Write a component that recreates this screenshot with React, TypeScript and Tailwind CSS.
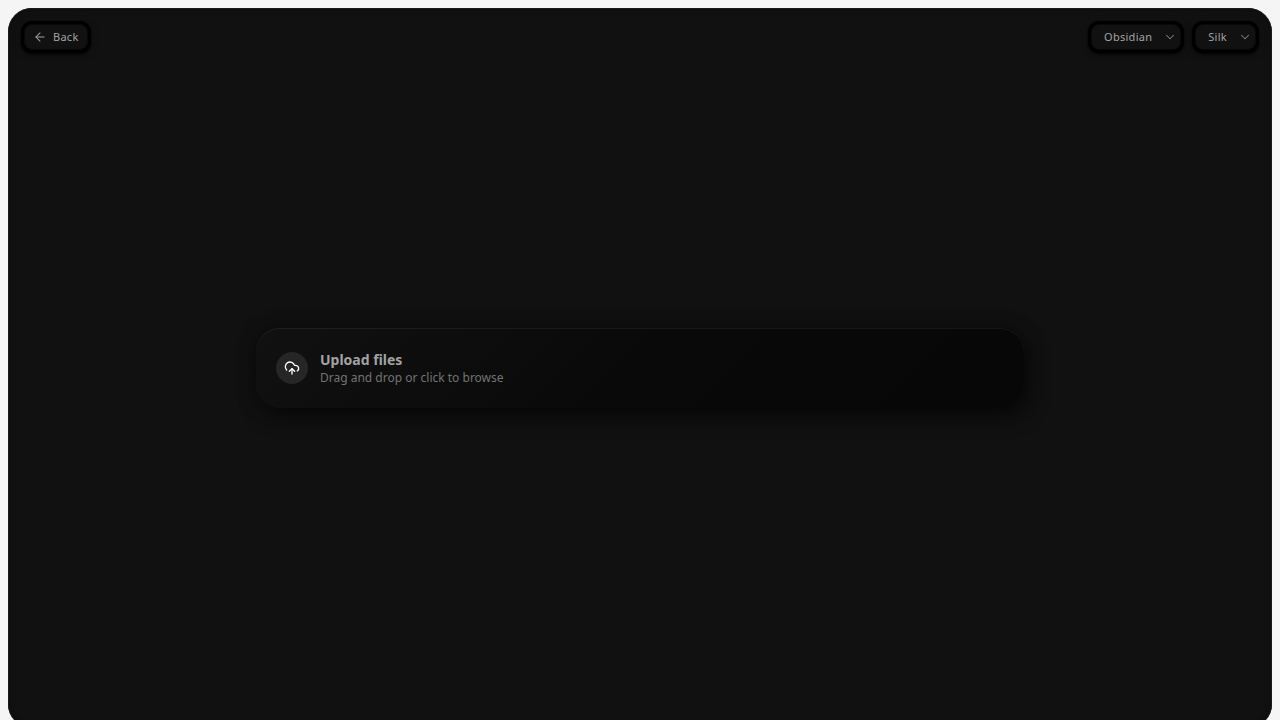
import { useState } from 'react';
import { ArrowLeft, ChevronDown, CloudUpload } from 'lucide-react';
import clsx from 'clsx';

const CONTROL =
  'h-[26px] rounded-lg border border-[#080808] bg-[#111111] text-[11px] leading-4 tracking-wide text-[#a3a3a3] shadow-[0_0_0_3px_#000000,0_1px_2px_3px_rgba(0,0,0,0.8),0_2px_8px_2px_rgba(0,0,0,0.4)]';

function ThemeSelect({ label, options }: { label: string; options: string[] }) {
  const [value, setValue] = useState(options[0]);

  return (
    <div className="relative flex">
      <select
        aria-label={label}
        value={value}
        onChange={(e) => setValue(e.target.value)}
        className={clsx(CONTROL, 'appearance-none field-sizing-content pl-3 pr-7 outline-none')}
      >
        {options.map((option) => (
          <option key={option} value={option}>
            {option}
          </option>
        ))}
      </select>
      <ChevronDown
        size={14}
        strokeWidth={1.75}
        className="pointer-events-none absolute right-1 top-1.5 text-[#808080]"
      />
    </div>
  );
}

function UploadCard() {
  return (
    <label className="flex h-20 w-full max-w-3xl cursor-pointer items-center gap-3 rounded-3xl bg-linear-135 from-[#111111] via-[#090909] via-50% to-[#070707] px-5 shadow-[4px_8px_20px_rgba(0,0,0,0.5),0_0_20px_rgba(0,0,0,0.35),inset_0_1px_0_rgba(255,255,255,0.06)]">
      <input type="file" multiple className="sr-only" />
      <span className="flex size-8 items-center justify-center rounded-full bg-[#262626] text-white">
        <CloudUpload size={16} />
      </span>
      <span className="flex flex-col">
        <span className="text-sm leading-5 font-bold text-[#a3a3a3]">Upload files</span>
        <span className="text-xs leading-4 text-[#737373]">Drag and drop or click to browse</span>
      </span>
    </label>
  );
}

export default function App() {
  return (
    <div className="bg-[#f5f5f5] p-2 font-['Noto_Sans',sans-serif]">
      <main className="relative flex h-screen items-center justify-center rounded-3xl bg-[#111111] px-6 shadow-[inset_0_0_0_1px_#1a1a1a,inset_0_0_6px_rgba(0,0,0,0.5)]">
        {/* Toolbar */}
        <div className="absolute inset-x-4 top-4 flex items-center justify-between">
          <button type="button" className={clsx(CONTROL, 'flex items-center gap-1.5 px-2')}>
            <ArrowLeft size={14} strokeWidth={1.75} />
            Back
          </button>
          <div className="flex items-center gap-3.5">
            <ThemeSelect label="Theme" options={['Obsidian']} />
            <ThemeSelect label="Texture" options={['Silk']} />
          </div>
        </div>

        <UploadCard />
      </main>
    </div>
  );
}
